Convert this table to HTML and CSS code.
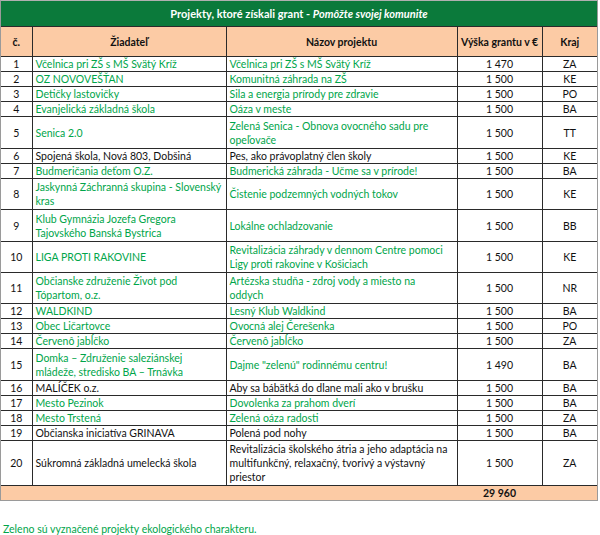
FILE: index.html
```html
<!DOCTYPE html>
<html>
<head>
<meta charset="utf-8">
<link rel="stylesheet" href="styles.css">
</head>
<body>
<div class="sheet">
<table class="grid">
<colgroup><col class="c1"><col class="c2"><col class="c3"><col class="c4"><col class="c5"></colgroup>
<tr class="title"><td colspan="5">Projekty, ktoré získali grant - <i>Pomôžte svojej komunite</i></td></tr>
<tr class="head"><th>č.</th><th>Žiadateľ</th><th>Názov projektu</th><th>Výška grantu v €</th><th>Kraj</th></tr>
<tr class="h1"><td class="n">1</td><td class="g">Včelnica pri ZŠ s MŠ Svätý Kríž</td><td class="g">Včelnica pri ZŠ s MŠ Svätý Kríž</td><td class="n">1 470</td><td class="n">ZA</td></tr>
<tr class="h1"><td class="n">2</td><td class="g">OZ NOVOVEŠŤAN</td><td class="g">Komunitná záhrada na ZŠ</td><td class="n">1 500</td><td class="n">KE</td></tr>
<tr class="h1"><td class="n">3</td><td class="g">Detičky lastovičky</td><td class="g">Sila a energia prírody pre zdravie</td><td class="n">1 500</td><td class="n">PO</td></tr>
<tr class="h1"><td class="n">4</td><td class="g">Evanjelická základná škola</td><td class="g">Oáza v meste</td><td class="n">1 500</td><td class="n">BA</td></tr>
<tr class="h2b"><td class="n">5</td><td class="g">Senica 2.0</td><td class="g">Zelená Senica - Obnova ovocného sadu pre<br>opeľovače</td><td class="n">1 500</td><td class="n">TT</td></tr>
<tr class="h1"><td class="n">6</td><td>Spojená škola, Nová 803, Dobšiná</td><td>Pes, ako právoplatný člen školy</td><td class="n">1 500</td><td class="n">KE</td></tr>
<tr class="h1"><td class="n">7</td><td class="g">Budmeričania deťom O.Z.</td><td class="g">Budmerická záhrada - Učme sa v prírode!</td><td class="n">1 500</td><td class="n">BA</td></tr>
<tr class="h2"><td class="n">8</td><td class="g">Jaskynná Záchranná skupina - Slovenský<br>kras</td><td class="g">Čistenie podzemných vodných tokov</td><td class="n">1 500</td><td class="n">KE</td></tr>
<tr class="h2b"><td class="n">9</td><td class="g">Klub Gymnázia Jozefa Gregora<br>Tajovského Banská Bystrica</td><td class="g">Lokálne ochladzovanie</td><td class="n">1 500</td><td class="n">BB</td></tr>
<tr class="h2"><td class="n">10</td><td class="g">LIGA PROTI RAKOVINE</td><td class="g">Revitalizácia záhrady v dennom Centre pomoci<br>Ligy proti rakovine v Košiciach</td><td class="n">1 500</td><td class="n">KE</td></tr>
<tr class="h2"><td class="n">11</td><td class="g">Občianske združenie Život pod<br>Tópartom, o.z.</td><td class="g">Artézska studňa - zdroj vody a miesto na<br>oddych</td><td class="n">1 500</td><td class="n">NR</td></tr>
<tr class="h1"><td class="n">12</td><td class="g">WALDKIND</td><td class="g">Lesný Klub Waldkind</td><td class="n">1 500</td><td class="n">BA</td></tr>
<tr class="h1"><td class="n">13</td><td class="g">Obec Ličartovce</td><td class="g">Ovocná alej Čerešenka</td><td class="n">1 500</td><td class="n">PO</td></tr>
<tr class="h1"><td class="n">14</td><td class="g">Červenô jabĺčko</td><td class="g">Červenô jabĺčko</td><td class="n">1 500</td><td class="n">ZA</td></tr>
<tr class="h2b"><td class="n">15</td><td class="g">Domka – Združenie saleziánskej<br>mládeže, stredisko BA – Trnávka</td><td class="g">Dajme "zelenú" rodinnému centru!</td><td class="n">1 490</td><td class="n">BA</td></tr>
<tr class="h1"><td class="n">16</td><td>MALÍČEK o.z.</td><td>Aby sa bábätká do dlane mali ako v brušku</td><td class="n">1 500</td><td class="n">BA</td></tr>
<tr class="h1"><td class="n">17</td><td class="g">Mesto Pezinok</td><td class="g">Dovolenka za prahom dverí</td><td class="n">1 500</td><td class="n">BA</td></tr>
<tr class="h1"><td class="n">18</td><td class="g">Mesto Trstená</td><td class="g">Zelená oáza radosti</td><td class="n">1 500</td><td class="n">ZA</td></tr>
<tr class="h1"><td class="n">19</td><td>Občianska iniciatíva GRINAVA</td><td>Polená pod nohy</td><td class="n">1 500</td><td class="n">BA</td></tr>
<tr class="h3"><td class="n">20</td><td>Súkromná základná umelecká škola</td><td>Revitalizácia školského átria a jeho adaptácia na<br>multifunkčný, relaxačný, tvorivý a výstavný<br>priestor</td><td class="n">1 500</td><td class="n">ZA</td></tr>
<tr class="total"><td colspan="3"></td><td class="sum">29 960</td><td></td></tr>
</table>
</div>
<p class="note">Zeleno sú vyznačené projekty ekologického charakteru.</p>
</body>
</html>
```

FILE: styles.css
```css
html, body {
  margin: 0;
  padding: 0;
  background: #ffffff;
}
body {
  font-family: "Lato", "Liberation Sans", sans-serif;
  font-size: 10.5px;
  color: #111111;
}
.sheet {
  width: 596px;
  border: 1px solid #9a9a9a;
  border-top-color: #b0b0b0;
}
.grid {
  width: 596px;
  border-collapse: collapse;
  table-layout: fixed;
}
.c1 { width: 31px; }
.c2 { width: 194px; }
.c3 { width: 231px; }
.c4 { width: 85px; }
.c5 { width: 55px; }
.grid td, .grid th {
  border: 1px solid #2a2a2a;
  padding: 0 3px;
  line-height: 14px;
  vertical-align: middle;
  text-align: left;
  white-space: nowrap;
  overflow: hidden;
}
.grid tr:first-child td { border-top: none; }
.grid td:first-child, .grid th:first-child { border-left: none; }
.grid td:last-child, .grid th:last-child { border-right: none; }
.title td {
  background: #0b7a3b;
  color: #ffffff;
  font-weight: bold;
  text-align: center;
  height: 25px;
  font-size: 11px;
  border-color: #0b7a3b #0b7a3b #2a2a2a;
}
.head th {
  background: #fccba5;
  font-weight: bold;
  text-align: center;
  height: 29px;
}
.h1 td { height: 14px; }
.h2 td { height: 30px; }
.h2b td { height: 31px; }
.h3 td { height: 44px; }
.n { text-align: center !important; }
.g { color: #00a54a; }
.total td {
  background: #fccba5;
  height: 14px;
  border-left: none;
  border-right: none;
  border-bottom: none;
  border-top: 1px solid #8a8a8a;
}
.total .sum {
  font-weight: bold;
  text-align: center;
}
.note {
  margin: 21px 0 0 3px;
  color: #00a54a;
  font-size: 10.5px;
  line-height: 14px;
}
```
